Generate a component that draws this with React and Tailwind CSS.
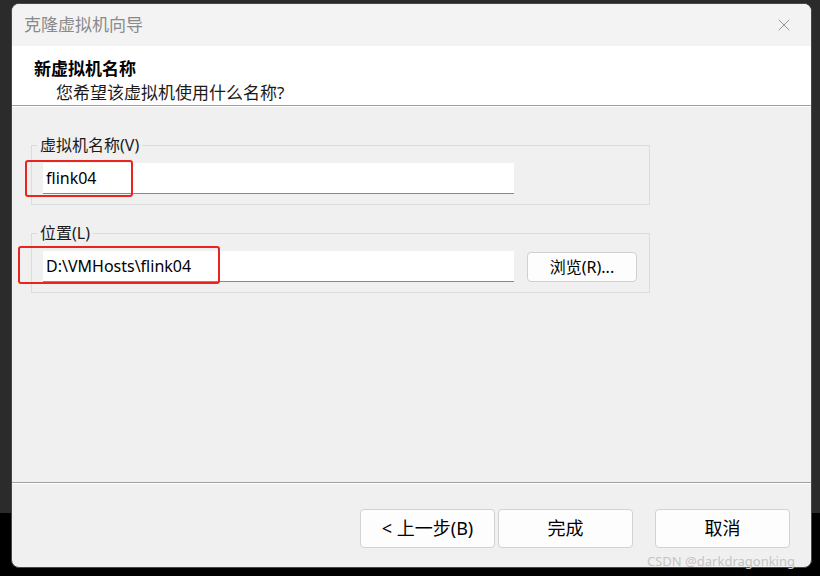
import { X } from 'lucide-react'

const FONT = "font-['Noto_Sans','Noto_Sans_CJK_SC',sans-serif]"

function Field({ label, value, children }) {
  return (
    <fieldset className="w-[619px] border border-[#dcdcdc] pl-[11px] pr-[12px] pb-[10px] pt-[8px]">
      <legend className="ml-[-6px] px-[3px] text-[16px] leading-[20px] text-[#1a1a1a]">{label}</legend>
      <div className="flex items-center gap-[13px]">
        <div className="w-[471px] h-[31px] bg-white border-b border-[#8a8a8a] flex items-center pl-[3px] text-[16px] text-black">
          {value}
        </div>
        {children}
      </div>
    </fieldset>
  )
}

function Btn({ children, className = '' }) {
  return (
    <button className={`w-[135px] h-[39px] rounded-[4px] border border-[#d2d2d2] bg-[#fdfdfd] text-[18px] text-black ${className}`}>
      {children}
    </button>
  )
}

export default function App() {
  return (
    <div className={`relative w-[820px] h-[576px] overflow-hidden pt-[3px] pl-[11px] bg-[linear-gradient(#2b2b2b_0,#2b2b2b_513px,#000_513px)] ${FONT}`}>
      <div className="w-[801px] h-[565px] rounded-[8px] border border-[#474747] overflow-hidden flex flex-col bg-[#f0f0f0]">
        {/* title bar */}
        <div className="h-[42px] bg-[#f3f3f3] flex items-center justify-between pl-[12px] pr-[17px] shrink-0">
          <span className="text-[17px] text-[#8a8a8a]">克隆虚拟机向导</span>
          <X size={20} strokeWidth={1.1} className="text-[#8c8c8c]" />
        </div>

        {/* header */}
        <div className="h-[59px] bg-white shrink-0 pl-[22px] pt-[11px]">
          <div className="text-[17px] leading-[24px] font-bold text-black">新虚拟机名称</div>
          <div className="pl-[22px] text-[17px] leading-[24px] text-[#1a1a1a]">您希望该虚拟机使用什么名称?</div>
        </div>
        <div className="border-t border-[#a0a0a0] border-b border-b-white shrink-0" />

        {/* body */}
        <div className="flex-1 pl-[19px] pt-[28px] flex flex-col gap-[18px]">
          <Field label="虚拟机名称(V)" value="flink04" />
          <Field label="位置(L)" value="D:\VMHosts\flink04">
            <button className="w-[110px] h-[30px] rounded-[4px] border border-[#d0d0d0] bg-[#fdfdfd] text-[16px] text-black">
              浏览(R)...
            </button>
          </Field>
        </div>

        {/* footer */}
        <div className="border-t border-[#a0a0a0] border-b border-b-white shrink-0" />
        <div className="h-[83px] shrink-0 flex items-start justify-end pt-[25px] pr-[21px]">
          <Btn>&lt; 上一步(B)</Btn>
          <Btn className="ml-[3px]">完成</Btn>
          <Btn className="ml-[22px]">取消</Btn>
        </div>
      </div>

      {/* annotations */}
      <div className="absolute left-[25px] top-[160px] w-[108px] h-[37px] border-2 border-[#e8261f] rounded-[3px]" />
      <div className="absolute left-[18px] top-[246px] w-[202px] h-[38px] border-2 border-[#e8261f] rounded-[3px]" />
      <div className="absolute left-[647px] top-[552px] text-[13px] text-[#c4c4c4]">CSDN @darkdragonking</div>
    </div>
  )
}
